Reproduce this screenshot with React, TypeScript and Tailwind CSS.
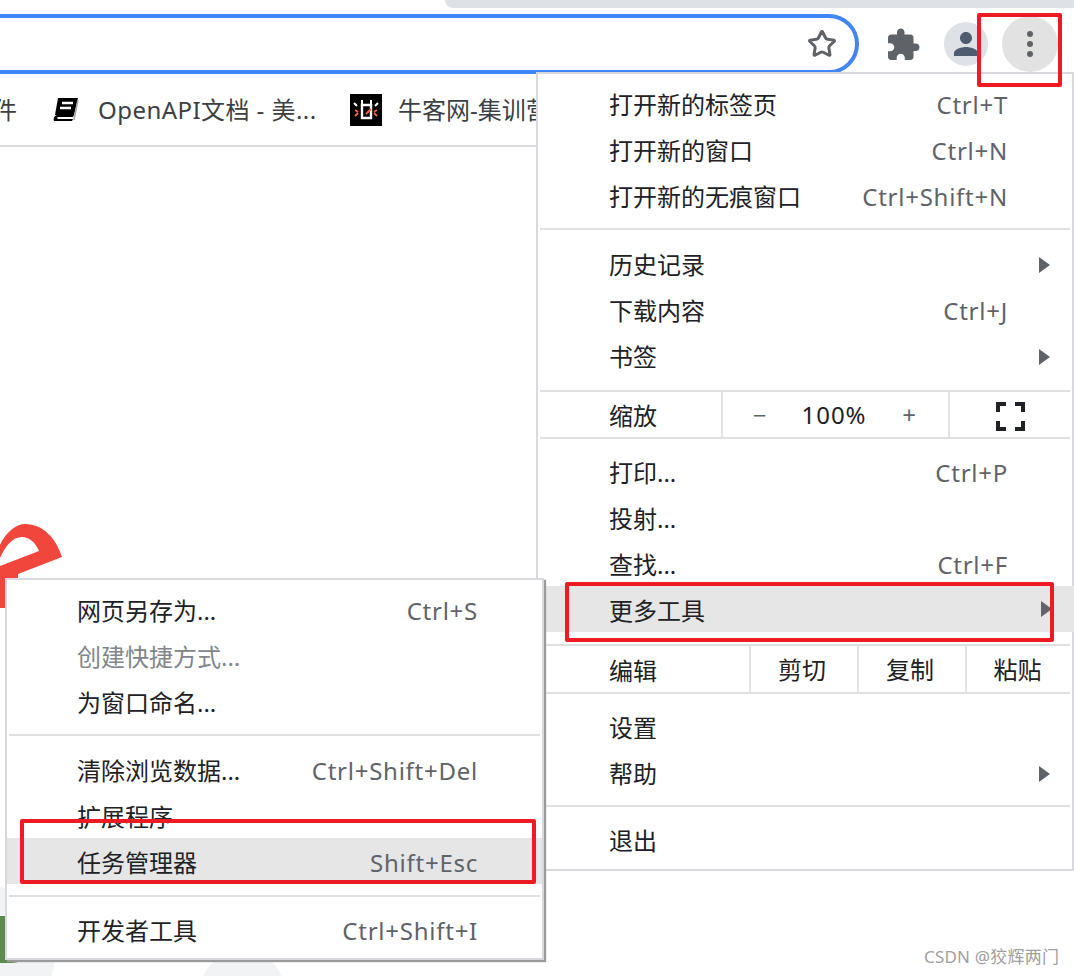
import React from 'react';
import { Star } from 'lucide-react';

const FONT = { fontFamily: '"Noto Sans", "Noto Sans CJK SC", sans-serif' };

interface RowProps {
  label: string;
  shortcut?: string;
  arrow?: boolean;
  active?: boolean;
  disabled?: boolean;
  pl: string;
  pr: string;
}

const Row: React.FC<RowProps> = ({ label, shortcut, arrow, active, disabled, pl, pr }) => (
  <div className={`relative flex h-[46px] items-center justify-between ${pl} ${pr} ${active ? 'bg-[#e6e6e6] pt-[4px]' : ''}`}>
    <span className={disabled ? 'text-[#80868b]' : 'text-[#202124]'}>{label}</span>
    {shortcut && <span className="tracking-[0.75px] text-[#5f6368]">{shortcut}</span>}
    {arrow && (
      <span className="absolute right-[22px] top-1/2 h-0 w-0 -translate-y-1/2 border-y-[8px] border-l-[11px] border-y-transparent border-l-[#5f6368]" />
    )}
  </div>
);

const Sep = () => <div className="mx-[2px] h-[2px] bg-[#e0e0e0]" />;

const MainRow = (props: Omit<RowProps, 'pl' | 'pr'>) => <Row {...props} pl="pl-[71px]" pr="pr-[64px]" />;
const SubRow = (props: Omit<RowProps, 'pl' | 'pr'>) => <Row {...props} pl="pl-[70px]" pr="pr-[64px]" />;

const MainMenu = () => (
  <div className="absolute left-[536px] top-[72px] h-[799px] w-[538px] border-2 border-[#d9d9dd] bg-white text-[24px] leading-none">
    <div className="pt-[8px] pb-[8px]">
      <MainRow label="打开新的标签页" shortcut="Ctrl+T" />
      <MainRow label="打开新的窗口" shortcut="Ctrl+N" />
      <MainRow label="打开新的无痕窗口" shortcut="Ctrl+Shift+N" />
    </div>
    <Sep />
    <div className="pt-[12px] pb-[10px]">
      <MainRow label="历史记录" arrow />
      <MainRow label="下载内容" shortcut="Ctrl+J" />
      <MainRow label="书签" arrow />
    </div>
    <Sep />
    <div className="flex h-[45px] items-center">
      <span className="w-[183px] pl-[71px] pt-[3px] text-[#202124]">缩放</span>
      <div className="flex h-full w-[229px] items-center border-x-2 border-[#e4e4e4] text-[#202124]">
        <span className="w-[73px] text-center text-[#5f6368]">−</span>
        <span className="w-[76px] text-center tracking-[1px]">100%</span>
        <span className="w-[74px] text-center text-[#5f6368]">+</span>
      </div>
      <div className="flex flex-1 justify-center pr-[2px] pt-[3px]">
        <svg width="29" height="29" viewBox="0 0 29 29" fill="none" stroke="#202124" strokeWidth="4">
          <path d="M2 10V2h8M19 2h8v8M27 19v8h-8M10 27H2v-8" />
        </svg>
      </div>
    </div>
    <Sep />
    <div className="pt-[11px] pb-[12px]">
      <MainRow label="打印..." shortcut="Ctrl+P" />
      <MainRow label="投射..." />
      <div className="-mb-[2px]">
        <MainRow label="查找..." shortcut="Ctrl+F" />
      </div>
      <div className="-mx-[2px]">
        <Row label="更多工具" arrow active pl="pl-[73px]" pr="pr-[64px]" />
      </div>
    </div>
    <Sep />
    <div className="flex h-[46px] items-center pt-[4px] text-[#202124]">
      <span className="w-[211px] pl-[71px]">编辑</span>
      <div className="-mt-[4px] flex h-[46px] flex-1">
        <span className="flex w-[108px] items-center justify-center border-l-2 border-[#e4e4e4] pr-[4px] pt-[2px]">剪切</span>
        <span className="flex w-[108px] items-center justify-center border-l-2 border-[#e4e4e4] pr-[4px] pt-[2px]">复制</span>
        <span className="flex flex-1 items-center justify-center border-l-2 border-[#e4e4e4] pr-[4px] pt-[2px]">粘贴</span>
      </div>
    </div>
    <Sep />
    <div className="pt-[11px] pb-[8px]">
      <MainRow label="设置" />
      <MainRow label="帮助" arrow />
    </div>
    <Sep />
    <div className="pt-[11px]">
      <MainRow label="退出" />
    </div>
  </div>
);

const SubMenu = () => (
  <div className="absolute left-[5px] top-[578px] h-[382px] w-[539px] border-2 border-[#d9d9dd] bg-white text-[24px] leading-none shadow-[2px_2px_1px_#9a9a9a]">
    <div className="pt-[8px] pb-[8px]">
      <SubRow label="网页另存为..." shortcut="Ctrl+S" />
      <SubRow label="创建快捷方式..." disabled />
      <SubRow label="为窗口命名..." />
    </div>
    <Sep />
    <div className="pt-[12px] pb-[11px]">
      <SubRow label="清除浏览数据..." shortcut="Ctrl+Shift+Del" />
      <div className="-mb-[2px]">
        <SubRow label="扩展程序" />
      </div>
      <SubRow label="任务管理器" shortcut="Shift+Esc" active />
    </div>
    <Sep />
    <div className="pt-[11px]">
      <SubRow label="开发者工具" shortcut="Ctrl+Shift+I" />
    </div>
  </div>
);

export default function App() {
  return (
    <div className="relative h-[976px] w-[1074px] overflow-hidden bg-white" style={FONT}>
      {/* tab strip */}
      <div className="ml-[445px] h-[8px] rounded-bl-[14px] bg-[#dee1e6]" />

      {/* toolbar */}
      <div className="flex h-[66px] items-start pt-[6px]">
        <div className="-ml-[60px] flex h-[60px] w-[919px] shrink-0 items-center justify-end rounded-[30px] border-4 border-[#4285f4] pr-[18px]">
          <Star className="h-[30px] w-[30px] text-[#5f6368]" strokeWidth={2.4} />
        </div>
        <svg className="ml-[26px] mt-[13px] h-[36px] w-[36px]" viewBox="0 0 24 24" fill="#5f6368">
          <path d="M20.5 11H19V7c0-1.1-.9-2-2-2h-4V3.5C13 2.12 11.88 1 10.5 1S8 2.12 8 3.5V5H4c-1.1 0-1.99.9-1.99 2v3.8H3.5c1.49 0 2.7 1.21 2.7 2.7s-1.21 2.7-2.7 2.7H2V20c0 1.1.9 2 2 2h3.8v-1.5c0-1.49 1.21-2.7 2.7-2.7 1.49 0 2.7 1.21 2.7 2.7V22H17c1.1 0 2-.9 2-2v-4h1.5c1.38 0 2.5-1.12 2.5-2.5S21.88 11 20.5 11z" />
        </svg>
        <div className="ml-[23px] mt-[8px] flex h-[44px] w-[44px] items-center justify-center rounded-full bg-[#dee1e6]">
          <svg className="h-[36px] w-[36px]" viewBox="0 0 24 24" fill="#4f5b6e">
            <path d="M12 12c2.21 0 4-1.79 4-4s-1.79-4-4-4-4 1.79-4 4 1.79 4 4 4zm0 2c-2.67 0-8 1.34-8 4v2h16v-2c0-2.66-5.33-4-8-4z" />
          </svg>
        </div>
        <div className="ml-[14px] mt-[2px] flex h-[56px] w-[56px] flex-col items-center justify-center gap-[4px] rounded-full bg-[#e2e2e2]">
          <span className="h-[6px] w-[6px] rounded-full bg-[#5f6368]" />
          <span className="h-[6px] w-[6px] rounded-full bg-[#5f6368]" />
          <span className="h-[6px] w-[6px] rounded-full bg-[#5f6368]" />
        </div>
      </div>

      {/* bookmarks bar */}
      <div className="flex h-[73px] items-center overflow-hidden border-b-2 border-[#dadce0] text-[24px] text-[#3c4043]">
        <span className="-ml-[7px] w-[59px] shrink-0">件</span>
        <svg className="h-[26px] w-[28px] shrink-0" viewBox="0 0 28 26">
          <path d="M6 1h20l-4 17H3z" fill="#000" />
          <path d="M2 24c-1-2 0-5 3-6h17l-1 2H6c-1 0-1 2 0 2h15l-1 2z" fill="#000" />
          <path d="M10 6h11M8 11h11" stroke="#fff" strokeWidth="2.4" />
          <path d="M26 3l-4 20" stroke="#aaa" strokeWidth="1.5" />
        </svg>
        <span className="ml-[18px] w-[252px] shrink-0 whitespace-nowrap tracking-[0.45px]">OpenAPI文档 - 美...</span>
        <svg className="h-[32px] w-[32px] shrink-0" viewBox="0 0 32 32">
          <rect width="32" height="32" fill="#000" />
          <path d="M12 11h9v13h-9z" fill="none" stroke="#fff" strokeWidth="2.4" />
          <path d="M12 6v4M21 6v4M4 9l3 3M28 9l-3 3" fill="none" stroke="#fff" strokeWidth="2" />
          <path d="M5 16l3 2M8 19l-3 3M27 16l-3 2M24 19l3 3M16 20l5-5" stroke="#f0603c" strokeWidth="2" />
        </svg>
        <span className="ml-[16px] whitespace-nowrap">牛客网-集训营</span>
      </div>

      {/* page behind the menus */}
      <svg className="absolute left-0 top-[520px] h-[100px] w-[70px]" viewBox="0 0 70 100">
        <path d="M0 25C6 12 16 4 25 4c18 0 31 14 37 33L18 54v34L0 88z" fill="#f0463c" />
        <path d="M0 38C5 26 13 17 22 17c7 0 13 5 17 14L0 46z" fill="#fff" />
      </svg>
      <div className="absolute -left-[15px] top-[885px] h-[140px] w-[140px] -translate-x-[70px] rounded-full bg-[#f1f3f4]" />
      <div className="absolute -left-[35px] top-[916px] h-[47px] w-[70px] rounded-full bg-[#5c8a4f]" />
      <div className="absolute left-[200px] top-[950px] h-[120px] w-[85px] rounded-full bg-[#f1f3f4]" />

      <MainMenu />
      <SubMenu />

      {/* red annotations */}
      <div className="absolute left-[977px] top-[13px] h-[74px] w-[85px] rounded-[2px] border-[4px] border-[#ed1c24]" />
      <div className="absolute left-[565px] top-[582px] h-[60px] w-[489px] rounded-[2px] border-[4px] border-[#ed1c24]" />
      <div className="absolute left-[20px] top-[819px] h-[65px] w-[516px] rounded-[2px] border-[4px] border-[#ed1c24]" />

      <span className="absolute left-[924px] top-[946px] text-[17px] leading-[22px] tracking-[0.2px] text-[#a0a0a0]">CSDN @狡辉两门</span>
    </div>
  );
}
